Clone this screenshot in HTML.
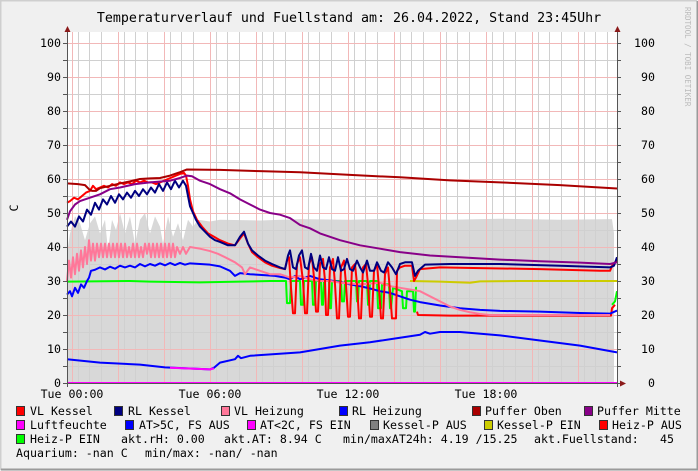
<!DOCTYPE html>
<html><head><meta charset="utf-8"><style>
html,body{margin:0;padding:0;width:698px;height:471px;overflow:hidden;background:#f0f0f0}
svg{display:block}
text{font-family:"DejaVu Sans Mono","Liberation Mono",monospace;fill:#000}
</style></head><body>
<svg width="698" height="471" viewBox="0 0 698 471" xmlns="http://www.w3.org/2000/svg">
<rect x="0" y="0" width="698" height="471" fill="#f0f0f0"/>
<path d="M0.5 470V0.5H697" stroke="#cfcfcf" stroke-width="2" fill="none"/>
<path d="M1 469.5H697.5V1" stroke="#9a9a9a" stroke-width="2" fill="none"/>
<rect x="67" y="32" width="550" height="351" fill="#fff"/>
<text x="349" y="22" font-size="13.3" text-anchor="middle">Temperaturverlauf und Fuellstand am: 26.04.2022, Stand 23:45Uhr</text>
<text transform="translate(685,7) rotate(90)" font-size="7.5" style="fill:#bbb">RRDTOOL / TOBI OETIKER</text>
<text transform="translate(18,208) rotate(-90)" font-size="11.6" text-anchor="middle">C</text>

<g transform="translate(0,383) scale(1,-3.4)">
<polygon fill="#d8d8d8" points="67,0 67,38 70,44 75,49 80,47 85,42 90,47 95,49 100,44 105,48 108,39 112,48 116,45 120,50 125,44 130,49 135,41 140,48 145,50 150,44 155,49 160,46 163,41 168,49 173,43 178,47 183,42 188,48 193,46 198,48 210,47.5 220,48 260,47.8 300,48.2 350,48 400,48.4 450,48 500,48.3 560,48 612,48.2 614,44 614,0"/>
</g>
<g stroke="#d0d0d0" stroke-width="1">
<path d="M78.5 32V383M89.5 32V383M101.5 32V383M124.5 32V383M135.5 32V383M147.5 32V383M170.5 32V383M181.5 32V383M193.5 32V383M216.5 32V383M227.5 32V383M239.5 32V383M262.5 32V383M273.5 32V383M285.5 32V383M308.5 32V383M319.5 32V383M331.5 32V383M354.5 32V383M365.5 32V383M377.5 32V383M400.5 32V383M411.5 32V383M423.5 32V383M446.5 32V383M457.5 32V383M469.5 32V383M492.5 32V383M503.5 32V383M515.5 32V383M538.5 32V383M549.5 32V383M561.5 32V383M584.5 32V383M595.5 32V383M607.5 32V383"/>
<path d="M67 366.5H617M67 332.5H617M67 298.5H617M67 264.5H617M67 230.5H617M67 196.5H617M67 162.5H617M67 128.5H617M67 94.5H617M67 60.5H617"/>
</g>
<g stroke="#f2b8b8" stroke-width="1">
<path d="M72.5 32V383M118.5 32V383M164.5 32V383M210.5 32V383M256.5 32V383M302.5 32V383M348.5 32V383M394.5 32V383M440.5 32V383M486.5 32V383M532.5 32V383M578.5 32V383"/>
<path d="M67 349.5H617M67 315.5H617M67 281.5H617M67 247.5H617M67 213.5H617M67 179.5H617M67 145.5H617M67 111.5H617M67 77.5H617M67 43.5H617"/>
</g>

<g transform="translate(0,383) scale(1,-3.4)" fill="none" stroke-width="2" stroke-linejoin="round">
<polyline vector-effect="non-scaling-stroke" stroke="#0000ff" points="67,7 100,6 140,5.4 165,4.6 210,4 214,4.5 220,6 235,7 238,8 241,7.3 250,8 300,9 340,11 370,12 400,13.3 420,14.2 425,15 430,14.5 440,15 460,15 500,14 540,12.5 580,11 617,9"/>
<polyline vector-effect="non-scaling-stroke" stroke="#ff00ff" points="170,4.5 210,4 214,4.3"/>
<polyline vector-effect="non-scaling-stroke" stroke="#cccc00" points="410,30 440,29.8 470,29.5 480,29.9 520,30 617,30"/>
<polyline vector-effect="non-scaling-stroke" stroke="#00ff00" points="67,29.8 130,30 150,29.8 200,29.6 240,29.8 270,30 286,30 287,23.5 290,23.5 291,30 300,30 301,23 303,23 304,30 312,30 313,23 315,23 316,30 321,30 322,23 323,23 324,30 329,30 330,22 331,22 332,30 341,30 342,24 344,24 345,30 356,30 357,24 358,24 359,30 367,30 368,23 369,23 370,30 377,30 378,22 381,22 382,29 389,29 390,22 391,22 393,28 402,27 403,22 406,22 407,27 413,27 414,21 415,21 416,28 417,28"/>
<polyline vector-effect="non-scaling-stroke" stroke="#ff0000" points="417,21 418,20 450,19.8 500,19.8 560,19.8 611,19.8 612,22 615,23"/>
<polyline vector-effect="non-scaling-stroke" stroke="#00ff00" points="612,23 615,24 617,27"/>
<polyline vector-effect="non-scaling-stroke" stroke="#0000ff" points="67,26 70,27 72,25.5 75,28 78,26.5 81,29 84,28 87,30 89,31 91,33 95,33.3 100,34 105,33.4 110,34.2 115,33.6 120,34.5 125,34 130,34.5 135,34 140,35 145,34.3 150,35 155,34.5 160,35.2 165,34.6 170,35.3 175,34.7 180,35.3 185,34.8 190,35.2 200,35 210,34.8 220,34.3 230,33 235,31.5 240,32.3 250,32 260,31.8 275,31.5 285,31 290,30.5 295,31.5 300,30.5 310,31.5 320,30.5 330,30.2 340,29.7 350,29 360,28.5 370,27.8 380,27 390,26.5 400,25.5 410,24.5 420,23.8 440,22.8 460,22 480,21.5 500,21.2 540,21 580,20.6 610,20.4 613,20.8 617,21.3"/>
<polyline vector-effect="non-scaling-stroke" stroke="#ff7799" points="67,30 69,36 71,31 73,37 75,32 77,38 79,33 81,39 83,34 85,40 87,35 89,42 91,36 93,41 95,36 97,41 99,37 101,41 103,37 105,41 107,37 109,41 111,37 113,41 115,37 117,41 119,37 121,41 123,37 125,41 127,37 129,40 131,37 133,41 135,37 137,41 139,37 141,40 143,37 145,41 147,38 149,41 151,37 153,41 155,37 157,41 159,37 161,41 163,37 165,41 167,37 169,41 171,37 173,41 175,37 177,40 180,38 183,40 186,38 190,40 200,39.5 210,38.8 218,38 225,37 235,35.5 242,34 245,32 250,34 260,33 270,32 280,32 290,31 300,31.5 310,30.5 320,30 330,30 340,29.5 360,29 380,29.5 390,28.5 400,28 410,27.5 420,27 430,25.5 440,24 450,22.5 460,21.5 470,20.8 480,20.3 490,20 500,20 540,20 580,20 610,20"/>
<polyline vector-effect="non-scaling-stroke" stroke="#ff0000" points="67,53 70,53.5 74,54.5 78,54 82,55 86,56 90,56.5 93,58 96,57 100,57.5 104,58 108,57.5 112,58.5 116,58 120,59 124,58.5 128,59 132,58.5 136,59.5 140,59 144,59.5 148,59 152,59 156,58.5 160,59 164,59.5 168,60 172,60.5 176,61 180,61.5 184,61.8 186,61 188,58 190,54 193,50.5 197,48 202,46 208,44 214,43 220,42 228,41 235,40.5 240,42.5 244,44 248,41 252,38.5 258,37 265,35.5 272,34.5 280,33.8 285,33.5 287,36 289,37 291,28 293,20.5 295,20.5 297,35 300,37 303,30 305,20.5 307,20.5 309,35 312,37 314,31 316,21 318,21 320,35 323,36.5 325,30 326,20 328,20 330,34 333,36.5 335,29 337,19 339,19 341,34 344,36 346,29 348,19.5 350,19.5 352,34 355,35 357,29 359,19 361,19 363,34 366,35 368,29 370,19.5 372,19.5 374,33 377,35 379,28 381,19 383,19 385,32 388,34 390,27 392,19 396,19 397,33 400,34 405,34.5 412,34.5 414,30 416,31 420,33.5 440,34 480,33.8 540,33.5 600,33 610,33 613,35 617,36"/>
<polyline vector-effect="non-scaling-stroke" stroke="#000080" points="67,46 71,47.5 75,46 79,49 83,47.5 87,51 91,49.5 95,53 99,51 103,54 107,52.5 111,55 115,53 119,55.5 123,54 127,56 131,54.5 135,56.5 139,55 143,57 147,55.5 151,57.5 155,56 159,58.5 163,56.5 167,59 171,57 175,59.5 179,57.5 183,59.5 186,58 188,55 190,52 193,50 196,48 200,46 205,44.5 210,43 215,42 220,41.5 228,40.5 235,40.5 240,43 244,44.5 248,41 252,39 258,37.5 265,36 272,35 280,34 285,33.5 288,37.5 290,39 293,34 296,33.5 299,37.5 302,39 305,34 308,33.5 311,38 314,34 317,33 320,37.5 323,34 326,33.5 329,37 332,33.5 335,33 338,37 341,33 344,33.5 347,36.5 350,33.5 353,33 357,36 360,34 363,32.5 367,36 370,33 374,33 377,35.5 381,33 384,32.5 388,35.5 392,34 396,32 400,35 405,35.5 412,35.5 415,31.5 418,33 425,34.8 450,35 500,35 560,34.5 610,34 614,34.5 617,37"/>
<polyline vector-effect="non-scaling-stroke" stroke="#880088" points="67,48 70,50.5 75,52.5 80,53.5 90,54.5 100,55.5 110,57 120,57.5 135,58.5 150,59 170,59.5 180,60.3 187,61 192,60.8 200,59.5 210,58.5 220,57 230,55.8 240,54 250,52.5 260,51 270,50 280,49.5 290,48.5 300,46.5 310,45.5 320,44 340,42 360,40.5 380,39.5 400,38.5 430,37.5 460,37 500,36.3 540,35.8 580,35.4 610,35 617,35.5"/>
<polyline vector-effect="non-scaling-stroke" stroke="#aa0000" points="67,58.7 78,58.5 85,58.2 89,57 92,56.5 96,56.5 100,57.3 110,58 120,58.7 130,59.3 140,60 150,60.2 160,60.3 170,61 180,62 187,62.8 220,62.7 260,62.3 300,62 350,61.2 400,60.5 450,59.6 500,59 560,58.2 617,57.2"/>
<polyline vector-effect="non-scaling-stroke" stroke="#ff00ff" points="67,0 617,0"/>
</g>

<g stroke="#555" stroke-width="1" fill="none">
<path d="M67.5 30V387M617.5 30V387M63 383.5H621"/>
<path d="M63 366.5H67M63 349.5H67M63 332.5H67M63 315.5H67M63 298.5H67M63 281.5H67M63 264.5H67M63 247.5H67M63 230.5H67M63 213.5H67M63 196.5H67M63 179.5H67M63 162.5H67M63 145.5H67M63 128.5H67M63 111.5H67M63 94.5H67M63 77.5H67M63 60.5H67M63 43.5H67"/>
<path d="M617 366.5H621M617 349.5H621M617 332.5H621M617 315.5H621M617 298.5H621M617 281.5H621M617 264.5H621M617 247.5H621M617 230.5H621M617 213.5H621M617 196.5H621M617 179.5H621M617 162.5H621M617 145.5H621M617 128.5H621M617 111.5H621M617 94.5H621M617 77.5H621M617 60.5H621M617 43.5H621"/>
</g>
<g fill="#8b1a1a">
<polygon points="64.5,32 70.5,32 67.5,26"/>
<polygon points="614.5,32 620.5,32 617.5,26"/>
<polygon points="620,380.5 620,386.5 626,383.5"/>
</g>

<g font-size="11.6" text-anchor="end">
<text x="61" y="387">0</text><text x="61" y="353">10</text><text x="61" y="319">20</text><text x="61" y="285">30</text><text x="61" y="251">40</text><text x="61" y="217">50</text><text x="61" y="183">60</text><text x="61" y="149">70</text><text x="61" y="115">80</text><text x="61" y="81">90</text><text x="61" y="47">100</text>
<text x="655" y="387">0</text><text x="655" y="353">10</text><text x="655" y="319">20</text><text x="655" y="285">30</text><text x="655" y="251">40</text><text x="655" y="217">50</text><text x="655" y="183">60</text><text x="655" y="149">70</text><text x="655" y="115">80</text><text x="655" y="81">90</text><text x="655" y="47">100</text>
</g>
<g font-size="11.6" text-anchor="middle">
<text x="72" y="398">Tue 00:00</text><text x="210" y="398">Tue 06:00</text><text x="348" y="398">Tue 12:00</text><text x="486" y="398">Tue 18:00</text>
</g>

<g stroke="#333" stroke-width="1">
<rect x="16.5" y="406.5" width="8" height="9" fill="#ff0000"/>
<rect x="114.5" y="406.5" width="8" height="9" fill="#000080"/>
<rect x="221.5" y="406.5" width="8" height="9" fill="#ff7799"/>
<rect x="339.5" y="406.5" width="8" height="9" fill="#0000ff"/>
<rect x="472.5" y="406.5" width="8" height="9" fill="#aa0000"/>
<rect x="584.5" y="406.5" width="8" height="9" fill="#880088"/>
<rect x="16.5" y="420.5" width="8" height="9" fill="#ff00ff"/>
<rect x="125.5" y="420.5" width="8" height="9" fill="#0000ff"/>
<rect x="247.5" y="420.5" width="8" height="9" fill="#ff00ff"/>
<rect x="370.5" y="420.5" width="8" height="9" fill="#808080"/>
<rect x="484.5" y="420.5" width="8" height="9" fill="#cccc00"/>
<rect x="599.5" y="420.5" width="8" height="9" fill="#ff0000"/>
<rect x="16.5" y="434.5" width="8" height="9" fill="#00ff00"/>
</g>
<g font-size="11.6">
<text x="30" y="415">VL Kessel</text>
<text x="128" y="415">RL Kessel</text>
<text x="234" y="415">VL Heizung</text>
<text x="352" y="415">RL Heizung</text>
<text x="485" y="415">Puffer Oben</text>
<text x="597" y="415">Puffer Mitte</text>
<text x="30" y="429">Luftfeuchte</text>
<text x="139" y="429">AT&gt;5C, FS AUS</text>
<text x="260" y="429">AT&lt;2C, FS EIN</text>
<text x="383" y="429">Kessel-P AUS</text>
<text x="497" y="429">Kessel-P EIN</text>
<text x="612" y="429">Heiz-P AUS</text>
<text x="30" y="443">Heiz-P EIN</text>
<text x="121" y="443">akt.rH: 0.00</text>
<text x="224" y="443">akt.AT: 8.94 C</text>
<text x="343" y="443">min/maxAT24h: 4.19 /15.25</text>
<text x="534" y="443">akt.Fuellstand:</text>
<text x="660" y="443">45</text>
<text x="16" y="457">Aquarium: -nan C</text>
<text x="145" y="457">min/max: -nan/ -nan</text>
</g>
</svg>
</body></html>
